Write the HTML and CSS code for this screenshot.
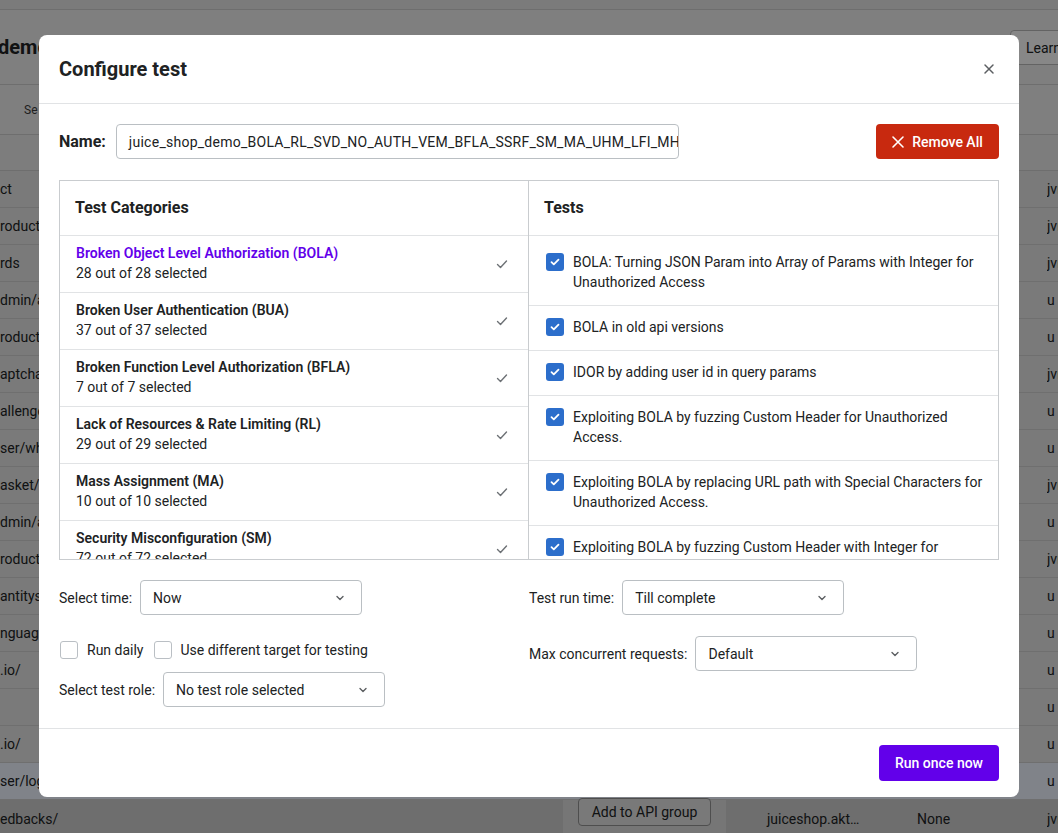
FILE: index.html
```html
<!DOCTYPE html>
<html lang="en">
<head>
<meta charset="utf-8">
<title>Configure test</title>
<link rel="stylesheet" href="styles.css">
</head>
<body>
<div class="page">
  <div class="topbar"></div>
  <div class="pagehead">
    <div class="pagetitle">demo</div>
    <div class="learn">Learn more</div>
  </div>
  <div class="tabs"><span class="tab">Se</span></div>
  <div class="thead"></div>
  <div class="rows">
    <div class="row"><span class="c-url">ct</span><span class="c-end">jvm</span></div>
    <div class="row"><span class="c-url">roducts</span><span class="c-end">jvm</span></div>
    <div class="row"><span class="c-url">rds</span><span class="c-end">jvm</span></div>
    <div class="row"><span class="c-url">dmin/a</span><span class="c-end">u</span></div>
    <div class="row"><span class="c-url">roducts</span><span class="c-end">u</span></div>
    <div class="row"><span class="c-url">aptcha/</span><span class="c-end">jvm</span></div>
    <div class="row"><span class="c-url">allenge</span><span class="c-end">u</span></div>
    <div class="row"><span class="c-url">ser/wh</span><span class="c-end">u</span></div>
    <div class="row"><span class="c-url">asket/I</span><span class="c-end">jvm</span></div>
    <div class="row"><span class="c-url">dmin/a</span><span class="c-end">u</span></div>
    <div class="row"><span class="c-url">roducts</span><span class="c-end">jvm</span></div>
    <div class="row"><span class="c-url">antitys</span><span class="c-end">u</span></div>
    <div class="row"><span class="c-url">nguag</span><span class="c-end">u</span></div>
    <div class="row"><span class="c-url">.io/</span><span class="c-end">u</span></div>
    <div class="row"><span class="c-url"></span><span class="c-end">u</span></div>
    <div class="row"><span class="c-url">.io/</span><span class="c-end">u</span></div>
    <div class="row row-hl"><span class="c-url">ser/log</span><span class="c-end">u</span></div>
    <div class="row row-last">
      <span class="c-url">edbacks/</span>
      <span class="c-panel"><span class="apibtn">Add to API group</span></span>
      <span class="c-gap"></span>
      <span class="c-host">juiceshop.akt…</span>
      <span class="c-auth">None</span>
      <span class="c-end">jvm</span>
    </div>
  </div>
</div>

<div class="backdrop"></div>

<div class="modal">
  <div class="m-head">
    <div class="m-title">Configure test</div>
    <div class="m-close">
      <svg width="12" height="12" viewBox="0 0 12 12"><path d="M2 2 L10 10 M10 2 L2 10" stroke="#5c5f62" stroke-width="1.5" stroke-linecap="round"/></svg>
    </div>
  </div>

  <div class="m-body">
    <div class="name-row">
      <label class="name-label">Name:</label>
      <div class="name-input">juice_shop_demo_BOLA_RL_SVD_NO_AUTH_VEM_BFLA_SSRF_SM_MA_UHM_LFI_MHH</div>
      <button class="btn-remove">
        <svg width="20" height="20" viewBox="0 0 20 20"><path d="M5 5 L15 15 M15 5 L5 15" stroke="#fff" stroke-width="1.6" stroke-linecap="round"/></svg>
        <span>Remove All</span>
      </button>
    </div>

    <div class="picker">
      <div class="col col-left">
        <div class="col-head">Test Categories</div>
        <div class="cat-list">
          <div class="cat cat-active">
            <div class="cat-text"><div class="cat-name">Broken Object Level Authorization (BOLA)</div><div class="cat-count">28 out of 28 selected</div></div>
            <svg class="tick" width="20" height="20" viewBox="0 0 20 20"><path d="M5.5 10.5 L8.5 13.5 L14.5 7" fill="none" stroke="#6d7175" stroke-width="1.4" stroke-linecap="round" stroke-linejoin="round"/></svg>
          </div>
          <div class="cat">
            <div class="cat-text"><div class="cat-name">Broken User Authentication (BUA)</div><div class="cat-count">37 out of 37 selected</div></div>
            <svg class="tick" width="20" height="20" viewBox="0 0 20 20"><path d="M5.5 10.5 L8.5 13.5 L14.5 7" fill="none" stroke="#6d7175" stroke-width="1.4" stroke-linecap="round" stroke-linejoin="round"/></svg>
          </div>
          <div class="cat">
            <div class="cat-text"><div class="cat-name">Broken Function Level Authorization (BFLA)</div><div class="cat-count">7 out of 7 selected</div></div>
            <svg class="tick" width="20" height="20" viewBox="0 0 20 20"><path d="M5.5 10.5 L8.5 13.5 L14.5 7" fill="none" stroke="#6d7175" stroke-width="1.4" stroke-linecap="round" stroke-linejoin="round"/></svg>
          </div>
          <div class="cat">
            <div class="cat-text"><div class="cat-name">Lack of Resources &amp; Rate Limiting (RL)</div><div class="cat-count">29 out of 29 selected</div></div>
            <svg class="tick" width="20" height="20" viewBox="0 0 20 20"><path d="M5.5 10.5 L8.5 13.5 L14.5 7" fill="none" stroke="#6d7175" stroke-width="1.4" stroke-linecap="round" stroke-linejoin="round"/></svg>
          </div>
          <div class="cat">
            <div class="cat-text"><div class="cat-name">Mass Assignment (MA)</div><div class="cat-count">10 out of 10 selected</div></div>
            <svg class="tick" width="20" height="20" viewBox="0 0 20 20"><path d="M5.5 10.5 L8.5 13.5 L14.5 7" fill="none" stroke="#6d7175" stroke-width="1.4" stroke-linecap="round" stroke-linejoin="round"/></svg>
          </div>
          <div class="cat">
            <div class="cat-text"><div class="cat-name">Security Misconfiguration (SM)</div><div class="cat-count">72 out of 72 selected</div></div>
            <svg class="tick" width="20" height="20" viewBox="0 0 20 20"><path d="M5.5 10.5 L8.5 13.5 L14.5 7" fill="none" stroke="#6d7175" stroke-width="1.4" stroke-linecap="round" stroke-linejoin="round"/></svg>
          </div>
        </div>
      </div>
      <div class="col col-right">
        <div class="col-head">Tests</div>
        <div class="test-list">
          <div class="test">
            <span class="cb cb-on"><svg width="18" height="18" viewBox="0 0 18 18"><path d="M5.5 9.2 L7.8 11.4 L12.5 6.6" fill="none" stroke="#fff" stroke-width="1.8" stroke-linecap="round" stroke-linejoin="round"/></svg></span>
            <span class="test-name">BOLA: Turning JSON Param into Array of Params with Integer for Unauthorized Access</span>
          </div>
          <div class="test">
            <span class="cb cb-on"><svg width="18" height="18" viewBox="0 0 18 18"><path d="M5.5 9.2 L7.8 11.4 L12.5 6.6" fill="none" stroke="#fff" stroke-width="1.8" stroke-linecap="round" stroke-linejoin="round"/></svg></span>
            <span class="test-name">BOLA in old api versions</span>
          </div>
          <div class="test">
            <span class="cb cb-on"><svg width="18" height="18" viewBox="0 0 18 18"><path d="M5.5 9.2 L7.8 11.4 L12.5 6.6" fill="none" stroke="#fff" stroke-width="1.8" stroke-linecap="round" stroke-linejoin="round"/></svg></span>
            <span class="test-name">IDOR by adding user id in query params</span>
          </div>
          <div class="test">
            <span class="cb cb-on"><svg width="18" height="18" viewBox="0 0 18 18"><path d="M5.5 9.2 L7.8 11.4 L12.5 6.6" fill="none" stroke="#fff" stroke-width="1.8" stroke-linecap="round" stroke-linejoin="round"/></svg></span>
            <span class="test-name">Exploiting BOLA by fuzzing Custom Header for Unauthorized Access.</span>
          </div>
          <div class="test">
            <span class="cb cb-on"><svg width="18" height="18" viewBox="0 0 18 18"><path d="M5.5 9.2 L7.8 11.4 L12.5 6.6" fill="none" stroke="#fff" stroke-width="1.8" stroke-linecap="round" stroke-linejoin="round"/></svg></span>
            <span class="test-name">Exploiting BOLA by replacing URL path with Special Characters for Unauthorized Access.</span>
          </div>
          <div class="test">
            <span class="cb cb-on"><svg width="18" height="18" viewBox="0 0 18 18"><path d="M5.5 9.2 L7.8 11.4 L12.5 6.6" fill="none" stroke="#fff" stroke-width="1.8" stroke-linecap="round" stroke-linejoin="round"/></svg></span>
            <span class="test-name">Exploiting BOLA by fuzzing Custom Header with Integer for Unauthorized Access.</span>
          </div>
        </div>
      </div>
    </div>

    <div class="settings">
      <div class="set-col">
        <div class="field">
          <span class="f-label">Select time:</span>
          <div class="select"><span>Now</span>
            <svg width="20" height="20" viewBox="0 0 20 20"><path d="M7 8.5 L10 11.5 L13 8.5" fill="none" stroke="#5c5f62" stroke-width="1.4" stroke-linecap="round" stroke-linejoin="round"/></svg>
          </div>
        </div>
        <div class="checks">
          <label class="chk"><span class="cb cb-off"></span><span>Run daily</span></label>
          <label class="chk"><span class="cb cb-off"></span><span>Use different target for testing</span></label>
        </div>
        <div class="field">
          <span class="f-label">Select test role:</span>
          <div class="select"><span>No test role selected</span>
            <svg width="20" height="20" viewBox="0 0 20 20"><path d="M7 8.5 L10 11.5 L13 8.5" fill="none" stroke="#5c5f62" stroke-width="1.4" stroke-linecap="round" stroke-linejoin="round"/></svg>
          </div>
        </div>
      </div>
      <div class="set-col">
        <div class="field">
          <span class="f-label">Test run time:</span>
          <div class="select"><span>Till complete</span>
            <svg width="20" height="20" viewBox="0 0 20 20"><path d="M7 8.5 L10 11.5 L13 8.5" fill="none" stroke="#5c5f62" stroke-width="1.4" stroke-linecap="round" stroke-linejoin="round"/></svg>
          </div>
        </div>
        <div class="field field-max">
          <span class="f-label">Max concurrent requests:</span>
          <div class="select"><span>Default</span>
            <svg width="20" height="20" viewBox="0 0 20 20"><path d="M7 8.5 L10 11.5 L13 8.5" fill="none" stroke="#5c5f62" stroke-width="1.4" stroke-linecap="round" stroke-linejoin="round"/></svg>
          </div>
        </div>
      </div>
    </div>
  </div>

  <div class="m-foot">
    <button class="btn-run">Run once now</button>
  </div>
</div>
</body>
</html>
```

FILE: styles.css
```css
* { box-sizing: border-box; }

html, body {
  margin: 0;
  padding: 0;
}

body {
  width: 1058px;
  height: 833px;
  overflow: hidden;
  position: relative;
  font-family: Roboto, "Liberation Sans", Arial, sans-serif;
  font-size: 14px;
  line-height: 20px;
  color: #202223;
  background: #dedede;
}

/* ---------- background page ---------- */
.page {
  width: 1058px;
}

.topbar {
  height: 10px;
  background: #e0e0e0;
  border-bottom: 1px solid #c8c8c8;
}

.pagehead {
  height: 75px;
  display: flex;
  align-items: flex-start;
  background: #e8e8e8;
  border-bottom: 1px solid #c8c8c8;
}

.pagetitle {
  margin-top: 25px;
  margin-left: -2px;
  font-size: 20px;
  line-height: 24px;
  font-weight: 700;
}

.learn {
  margin-left: auto;
  margin-top: 20px;
  margin-right: -60px;
  width: 108px;
  height: 35px;
  padding: 7px 15px;
  background: #f6f6f6;
  border: 1px solid #b5b5b5;
  border-radius: 4px;
  font-size: 14px;
  white-space: nowrap;
}

.tabs {
  height: 50px;
  display: flex;
  align-items: center;
  padding-left: 24px;
  background: #e8e8e8;
  border-bottom: 1px solid #c8c8c8;
}

.tab {
  font-size: 12px;
  color: #3a3a3a;
}

.thead {
  height: 36px;
  background: #e4e4e4;
  border-bottom: 1px solid #c8c8c8;
}

.rows {
  display: flex;
  flex-direction: column;
}

.row {
  height: 37px;
  display: flex;
  align-items: center;
  border-bottom: 1px solid #cbcbcb;
  background: #dedede;
  white-space: nowrap;
}

.row-hl {
  background: #e9eefa;
}

.row-last {
  background: #c9c9c9;
  border-bottom: none;
  align-items: stretch;
}

.row-last > span {
  display: flex;
  align-items: center;
}

.c-url {
  flex: 1;
  overflow: hidden;
}

.row-last .c-url {
  flex: none;
  width: 563px;
}

.c-panel {
  width: 163px;
  background: #d8d8d8;
  padding-left: 15px;
  align-items: flex-start !important;
}

.apibtn {
  margin-top: -2px;
  display: block;
  width: 133px;
  height: 28px;
  line-height: 26px;
  text-align: center;
  border: 1px solid #8e8e8e;
  border-radius: 4px;
  background: #dcdcdc;
}

.c-gap {
  width: 41px;
}

.c-host {
  width: 150px;
}

.c-auth {
  width: 130px;
}

.c-end {
  width: 11px;
  overflow: hidden;
}

/* ---------- overlay ---------- */
.backdrop {
  position: absolute;
  inset: 0;
  background: rgba(0, 0, 0, 0.45);
}

/* ---------- modal ---------- */
.modal {
  position: absolute;
  left: 39px;
  top: 35px;
  width: 980px;
  height: 762px;
  background: #fff;
  border-radius: 8px;
  display: flex;
  flex-direction: column;
  overflow: hidden;
}

.m-head {
  height: 69px;
  flex: none;
  display: flex;
  align-items: center;
  justify-content: space-between;
  padding: 0 24px 0 20px;
  border-bottom: 1px solid #e1e3e5;
}

.m-title {
  font-size: 20px;
  line-height: 28px;
  font-weight: 700;
}

.m-close {
  display: flex;
}

.m-body {
  flex: 1;
  padding: 20px 20px 0 20px;
  border-bottom: 1px solid #e1e3e5;
}

.name-row {
  display: flex;
  align-items: center;
  height: 35px;
}

.name-label {
  font-size: 16px;
  font-weight: 700;
  margin-right: 10px;
}

.name-input {
  width: 563px;
  height: 35px;
  padding: 7px 12px;
  border: 1px solid #babfc3;
  border-radius: 4px;
  white-space: nowrap;
  overflow: hidden;
  color: #202223;
  letter-spacing: 0.26px;
}

.btn-remove {
  margin-left: auto;
  height: 35px;
  width: 123px;
  display: flex;
  align-items: center;
  justify-content: center;
  gap: 4px;
  border: none;
  border-radius: 4px;
  background: #c8290f;
  color: #fff;
  font-family: inherit;
  font-size: 14px;
  font-weight: 500;
  padding: 0 12px 0 8px;
}

.picker {
  margin-top: 21px;
  height: 380px;
  display: grid;
  grid-template-columns: 1fr 1fr;
  border: 1px solid #c9cccf;
  overflow: hidden;
}

.col {
  display: flex;
  flex-direction: column;
  min-height: 0;
  min-width: 0;
  overflow: hidden;
}

.col-left {
  border-right: 1px solid #c9cccf;
}

.col-head {
  flex: none;
  height: 55px;
  display: flex;
  align-items: center;
  padding-left: 15px;
  font-size: 16px;
  font-weight: 700;
  border-bottom: 1px solid #e1e3e5;
}

.cat-list, .test-list {
  flex: 1;
  overflow: hidden;
}

.cat {
  height: 57px;
  display: flex;
  align-items: center;
  padding: 0 16px;
  border-bottom: 1px solid #e1e3e5;
}

.cat-text {
  flex: 1;
  margin-top: -2px;
}

.cat-name {
  font-weight: 600;
}

.cat-active .cat-name {
  color: #6200ea;
}

.tick {
  flex: none;
}

.test-list {
  padding-top: 5px;
}

.test {
  display: flex;
  align-items: flex-start;
  gap: 9px;
  padding: 11px 8px 13px 17px;
  border-bottom: 1px solid #e1e3e5;
}

.test-name {
  flex: 1;
}

.cb {
  flex: none;
  width: 18px;
  height: 18px;
  border-radius: 3px;
  display: inline-flex;
  margin-top: 1px;
}

.cb-on {
  background: #2c6ecb;
}

.cb-off {
  border: 1.5px solid #babfc4;
  background: #fff;
}

/* ---------- settings ---------- */
.settings {
  margin-top: 20px;
  display: grid;
  grid-template-columns: 470px 470px;
}

.set-col {
  display: flex;
  flex-direction: column;
}

.field {
  display: flex;
  align-items: center;
  gap: 8px;
}

.field-max {
  margin-top: 21px;
}

.select {
  width: 222px;
  height: 35px;
  display: flex;
  align-items: center;
  justify-content: space-between;
  padding: 0 11px 0 12px;
  border: 1px solid #babfc3;
  border-radius: 4px;
  white-space: nowrap;
}

.checks {
  display: flex;
  align-items: center;
  gap: 10px;
  margin-top: 25px;
  margin-bottom: 12px;
  margin-left: 1px;
}

.chk {
  display: flex;
  align-items: center;
  gap: 9px;
}

.chk .cb {
  margin-top: 0;
}

/* ---------- footer ---------- */
.m-foot {
  flex: none;
  height: 68px;
  display: flex;
  justify-content: flex-end;
  align-items: flex-start;
  padding: 16px 20px;
}

.btn-run {
  width: 120px;
  height: 36px;
  border: none;
  border-radius: 4px;
  background: #6200ea;
  color: #fff;
  font-family: inherit;
  font-size: 14px;
  font-weight: 500;
}
```
